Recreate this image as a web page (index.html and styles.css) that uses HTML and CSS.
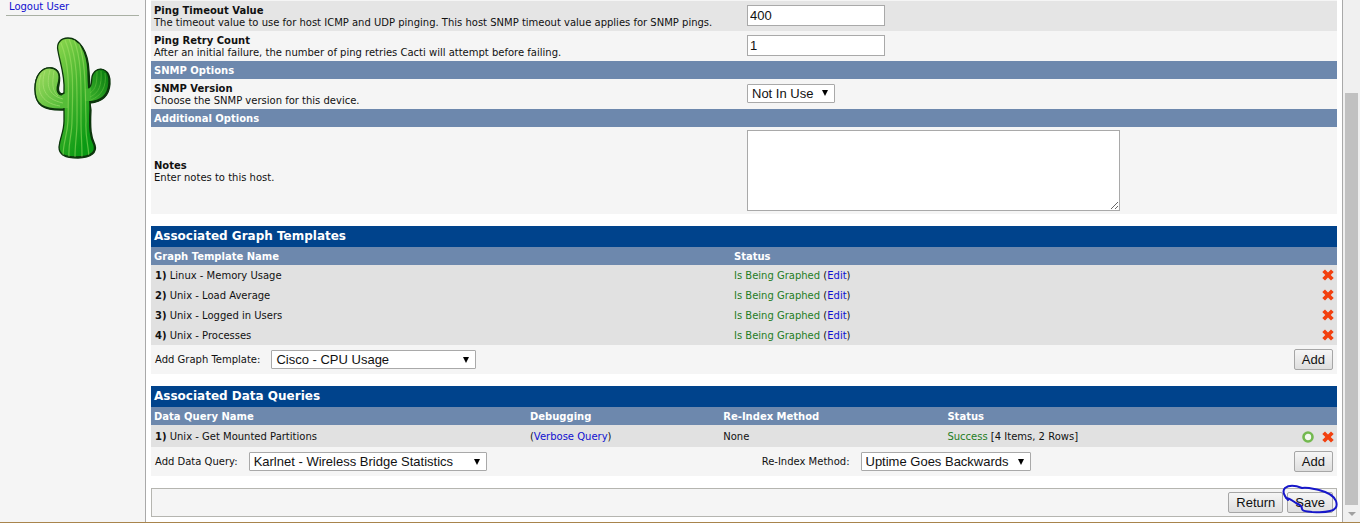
FILE: index.html
```html
<!DOCTYPE html>
<html lang="en">
<head>
    <meta charset="UTF-8">
    <meta name="viewport" content="width=device-width, initial-scale=1.0">
    <title>Console -> Devices -> (Edit)</title>
    <link rel="stylesheet" href="styles.css">
</head>
<body>
    <svg width="0" height="0" class="defs">
        <symbol id="delete" viewBox="0 0 12 12">
            <path d="M3 0.5 L6 3.5 L9 0.5 L11.7 3 L8.7 6 L11.7 9 L9 11.5 L6 8.6 L3 11.5 L0.3 9 L3.3 6 L0.3 3 Z" fill="#f2400f"/>
        </symbol>
    </svg>

    <div class="page">
        <div class="sidebar">
            <div class="menu"><a href="#">Logout User</a></div>
            <svg class="cactus" viewBox="0 0 78 122" role="img" aria-label="Cacti">
                <defs>
                    <linearGradient id="body" x1="0" y1="0" x2="0.5" y2="1">
                        <stop offset="0" stop-color="#8fd850"/>
                        <stop offset="0.5" stop-color="#48b52f"/>
                        <stop offset="1" stop-color="#0b9a14"/>
                    </linearGradient>
                    <linearGradient id="left" x1="0" y1="0" x2="1" y2="1">
                        <stop offset="0" stop-color="#a2dc62"/>
                        <stop offset="1" stop-color="#4cb934"/>
                    </linearGradient>
                    <linearGradient id="right" x1="0" y1="1" x2="1" y2="0">
                        <stop offset="0" stop-color="#3fb42e"/>
                        <stop offset="1" stop-color="#04780c"/>
                    </linearGradient>
                    <clipPath id="trunk">
                        <path d="M24 14C22 6 27 1 34 1C45 1 53 14 54 34C54 50 56 58 56 72C55 92 56 100 60 108C62 114 58 120 43 120C29 120 25 117 25 110C26 100 30 95 30 84L30 54C31 38 26 26 24 14Z"/>
                    </clipPath>
                </defs>
                <g stroke="#0c350c" stroke-width="1.3" stroke-linejoin="round">
                    <path fill="#123f10" d="M25 14C23 6 28 2 35 2C46 2 54 14 55 34L56 50C60 48 57 41 60 37C64 29 77 31 76 47C75 60 68 65 56 66L57 73C56 92 57 100 61 108C63 115 58 121 44 121C30 121 26 118 26 110C27 100 31 95 31 84L31 73C10 74 1 69 1 52C1 38 8 30 18 31C27 33 26 43 25 48C23 56 28 59 31 55C32 38 27 26 25 14Z"/>
                    <path fill="url(#left)" d="M31 72C9 73 1 68 1 52C1 38 8 30 17 31C26 32 26 40 24 47C21 57 27 60 31 56Z"/>
                    <path fill="url(#right)" d="M54 51C60 49 56 41 59 37C63 29 76 30 75 46C74 59 67 64 54 65Z"/>
                    <path fill="url(#body)" d="M24 14C22 6 27 1 34 1C45 1 53 14 54 34C54 50 56 58 56 72C55 92 56 100 60 108C62 114 58 120 43 120C29 120 25 117 25 110C26 100 30 95 30 84L30 54C31 38 26 26 24 14Z"/>
                </g>
                <path fill="#56bd38" d="M28 58L34 55L34 71L28 71Z"/>
                <path fill="#41b32f" d="M51 52L57 51L57 64L51 64Z"/>
                <g clip-path="url(#trunk)" fill="none" stroke="#a9e56c" stroke-width="1.2" opacity="0.5">
                    <path d="M27 6C35 26 35 45 34 84C33 100 29 105 29 120"/>
                    <path d="M31 3C40 24 39 50 38 84C38 98 34 106 35 120"/>
                    <path d="M35 2C44 24 43 50 43 84C43 98 41 106 41 120"/>
                    <path d="M40 3C48 22 47 50 47 84C47 98 48 106 48 120"/>
                    <path d="M45 6C52 28 51 50 52 84C51 98 54 106 55 120"/>
                </g>
                <g fill="none" stroke="#c1ec88" stroke-width="1" opacity="0.45">
                    <path d="M7 38C2 52 6 66 26 69"/>
                    <path d="M11 34C6 50 10 62 29 66"/>
                    <path d="M16 33C12 48 14 58 29 62"/>
                    <path d="M20 34C18 46 18 54 24 59"/>
                </g>
                <g fill="none" stroke="#78cd4c" stroke-width="1" opacity="0.45">
                    <path d="M63 34C63 46 62 52 56 56"/>
                    <path d="M67 34C68 48 65 56 56 60"/>
                    <path d="M71 36C73 50 67 59 57 63"/>
                </g>
            </svg>
        </div>

        <div class="content">
            <form action="#" method="post">
                <div class="panel first">
                    <div class="field odd">
                        <label for="ping_timeout"><b>Ping Timeout Value</b><br>The timeout value to use for host ICMP and UDP pinging. This host SNMP timeout value applies for SNMP pings.</label>
                        <div class="control"><input type="text" id="ping_timeout" value="400"></div>
                    </div>
                    <div class="field">
                        <label for="ping_retries"><b>Ping Retry Count</b><br>After an initial failure, the number of ping retries Cacti will attempt before failing.</label>
                        <div class="control"><input type="text" id="ping_retries" value="1"></div>
                    </div>
                    <div class="sub-header">SNMP Options</div>
                    <div class="field">
                        <label for="snmp_version"><b>SNMP Version</b><br>Choose the SNMP version for this device.</label>
                        <div class="control">
                            <select id="snmp_version" class="version">
                                <option>Not In Use</option>
                                <option>Version 1</option>
                                <option>Version 2</option>
                                <option>Version 3</option>
                            </select>
                        </div>
                    </div>
                    <div class="sub-header">Additional Options</div>
                    <div class="field">
                        <label for="notes"><b>Notes</b><br>Enter notes to this host.</label>
                        <div class="control"><textarea id="notes"></textarea></div>
                    </div>
                </div>

                <div class="panel">
                    <div class="title">Associated Graph Templates</div>
                    <table class="graphs">
                        <thead>
                            <tr><th class="template">Graph Template Name</th><th>Status</th><th class="actions"></th></tr>
                        </thead>
                        <tbody>
                            <tr>
                                <td><b>1)</b> Linux - Memory Usage</td>
                                <td><span class="ok">Is Being Graphed</span> (<a href="#">Edit</a>)</td>
                                <td class="actions"><a href="#" aria-label="Delete"><svg class="icon"><use href="#delete"/></svg></a></td>
                            </tr>
                            <tr>
                                <td><b>2)</b> Unix - Load Average</td>
                                <td><span class="ok">Is Being Graphed</span> (<a href="#">Edit</a>)</td>
                                <td class="actions"><a href="#" aria-label="Delete"><svg class="icon"><use href="#delete"/></svg></a></td>
                            </tr>
                            <tr>
                                <td><b>3)</b> Unix - Logged in Users</td>
                                <td><span class="ok">Is Being Graphed</span> (<a href="#">Edit</a>)</td>
                                <td class="actions"><a href="#" aria-label="Delete"><svg class="icon"><use href="#delete"/></svg></a></td>
                            </tr>
                            <tr>
                                <td><b>4)</b> Unix - Processes</td>
                                <td><span class="ok">Is Being Graphed</span> (<a href="#">Edit</a>)</td>
                                <td class="actions"><a href="#" aria-label="Delete"><svg class="icon"><use href="#delete"/></svg></a></td>
                            </tr>
                        </tbody>
                    </table>
                    <div class="add-row">
                        <div class="add-item">
                            <label for="graph_template">Add Graph Template:</label>
                            <select id="graph_template" class="template-list"><option>Cisco - CPU Usage</option></select>
                        </div>
                        <button type="button">Add</button>
                    </div>
                </div>

                <div class="panel">
                    <div class="title">Associated Data Queries</div>
                    <table class="queries">
                        <thead>
                            <tr><th class="query">Data Query Name</th><th class="debug">Debugging</th><th class="reindex">Re-Index Method</th><th>Status</th><th class="actions"></th></tr>
                        </thead>
                        <tbody>
                            <tr>
                                <td><b>1)</b> Unix - Get Mounted Partitions</td>
                                <td>(<a href="#">Verbose Query</a>)</td>
                                <td>None</td>
                                <td><span class="ok">Success</span> [4 Items, 2 Rows]</td>
                                <td class="actions">
                                    <a href="#" aria-label="Reload"><svg class="icon" viewBox="0 0 12 12"><circle cx="6" cy="6" r="4.5" fill="#f3f8ef" stroke="#73b94f" stroke-width="2.6"/></svg></a>
                                    <a href="#" aria-label="Delete"><svg class="icon"><use href="#delete"/></svg></a>
                                </td>
                            </tr>
                        </tbody>
                    </table>
                    <div class="add-row">
                        <div class="add-item half">
                            <label for="data_query">Add Data Query:</label>
                            <select id="data_query" class="query-list"><option>Karlnet - Wireless Bridge Statistics</option></select>
                        </div>
                        <div class="add-item">
                            <label for="reindex_method">Re-Index Method:</label>
                            <select id="reindex_method" class="reindex-list"><option>Uptime Goes Backwards</option></select>
                        </div>
                        <button type="button">Add</button>
                    </div>
                </div>

                <div class="form-buttons">
                    <button type="button">Return</button>
                    <span class="save">
                        <button type="submit">Save</button>
                        <svg class="pen" viewBox="0 0 60 32">
                            <path d="M7 17C3 13 1 8 4 5C9 1 16 3 21 5C27 4 32 6 38 7C46 9 53 13 55 18C57 24 54 27 49 28C42 30 37 29 31 29C26 28 22 29 21 26C21 23 19 22 15 20C12 18 8 15 5 15" fill="none" stroke="#1717c9" stroke-width="2" stroke-linecap="round"/>
                        </svg>
                    </span>
                </div>
            </form>
        </div>

        <div class="scrollbar">
            <div class="thumb"></div>
            <svg class="arrow" viewBox="0 0 8 4"><path d="M0 0H8L4 4Z" fill="#a0a0a0"/></svg>
        </div>
    </div>
    <div class="taskbar"></div>
</body>
</html>
```
FILE: styles.css
```css
* {
    box-sizing: border-box;
}

body {
    margin: 0;
    display: flex;
    flex-direction: column;
    min-height: 100vh;
    background: #fff;
    color: #111;
    font-family: Verdana, "DejaVu Sans", sans-serif;
    font-size: 10px;
    line-height: 12px;
}

a {
    color: #1010d0;
    text-decoration: none;
}

.defs {
    position: absolute;
}

.page {
    display: flex;
    flex: 1;
}

/* left menu */
.sidebar {
    width: 146px;
    flex-shrink: 0;
    padding: 0 6px;
    background: #f5f5f5;
    border-right: 1px solid #a9a9a9;
}

.menu {
    height: 16px;
    padding: 1px 3px 0;
    border-bottom: 1px solid #a9b0a4;
}

.cactus {
    display: block;
    width: 78px;
    height: 122px;
    margin: 21px 0 0 28px;
}

.content {
    flex: 1;
    padding: 0 5px;
    border-right: 1px solid #a9a9a9;
}

.panel {
    margin-bottom: 12px;
    background: #f5f5f5;
}

.first {
    padding-top: 1px;
}

.field {
    display: flex;
    align-items: center;
    min-height: 30px;
}

.odd {
    background: #e5e5e5;
}

.field label {
    width: 50%;
    padding: 2px 3px 0;
}

.control {
    width: 50%;
    padding: 0 3px 2px;
}

.sub-header,
th {
    height: 18px;
    padding: 2px 3px 0;
    background: #6d88ad;
    color: #fff;
    font-weight: bold;
    line-height: 16px;
    text-align: left;
}

.title {
    padding: 0 3px;
    background: #00438c;
    color: #fff;
    font-size: 12px;
    font-weight: bold;
    line-height: 21px;
}

input,
select,
textarea,
button {
    margin: 0;
    font-family: Arial, "Liberation Sans", sans-serif;
    font-size: 13px;
    color: #111;
}

input,
textarea,
.control select {
    display: block;
}

input,
textarea {
    background: #fff;
    border: 1px solid #a9a9a9;
}

input {
    width: 138px;
    height: 21px;
    padding: 0 2px;
}

textarea {
    width: 373px;
    height: 81px;
    margin: 3px 0 1px;
}

select {
    height: 19px;
    padding: 0 4px;
    appearance: none;
    background: #fff url("data:image/svg+xml,%3Csvg xmlns='http://www.w3.org/2000/svg' width='6' height='6'%3E%3Cpath d='M0 0H6L3 6Z'/%3E%3C/svg%3E") no-repeat right 6px center;
    border: 1px solid #a9a9a9;
    border-radius: 1px;
}

.version {
    width: 88px;
}

.template-list {
    width: 205px;
}

.query-list {
    width: 238px;
}

.reindex-list {
    width: 170px;
}

button {
    height: 21px;
    padding: 0 7px;
    background: linear-gradient(#f6f6f6, #dedede);
    border: 1px solid #a6a6a6;
    border-radius: 2px;
}

table {
    width: 100%;
    table-layout: fixed;
    border-collapse: collapse;
}

td {
    height: 20px;
    padding: 2px 3px 0;
    background: #e1e1e1;
}

td:first-child {
    padding-left: 4px;
}

.queries td {
    height: 22px;
}

.template {
    width: 48.9%;
}

.query {
    width: 31.7%;
}

.debug {
    width: 16.3%;
}

.reindex {
    width: 18.9%;
}

.actions {
    width: 50px;
    text-align: right;
    white-space: nowrap;
}

.graphs .actions {
    padding-top: 0;
}

.icon {
    width: 12px;
    height: 12px;
    margin-left: 5px;
    vertical-align: middle;
}

.ok {
    color: #1f7d1f;
}

.add-row {
    display: flex;
    align-items: center;
    height: 29px;
    padding: 0 4px;
}

.add-item {
    display: flex;
    align-items: center;
    gap: 11px;
}

.half {
    width: 51.5%;
}

.add-row button {
    margin-left: auto;
}

/* return / save bar */
.form-buttons {
    display: flex;
    justify-content: flex-end;
    gap: 4px;
    padding: 3px;
    background: #f5f5f5;
    border: 1px solid #b5b5b0;
}

.save {
    position: relative;
    display: flex;
}

.pen {
    position: absolute;
    left: -6px;
    top: -9px;
    width: 60px;
    height: 32px;
    pointer-events: none;
}

.scrollbar {
    display: grid;
    grid-template-rows: 93fr 412fr 17px;
    justify-items: center;
    width: 17px;
    flex-shrink: 0;
    background: #f0f0f0;
}

.thumb {
    grid-row: 2;
    width: 13px;
    background: #c1c1c1;
}

.arrow {
    grid-row: 3;
    width: 8px;
    height: 4px;
    align-self: center;
}

.taskbar {
    height: 1px;
    background: #a8844c;
}
```
